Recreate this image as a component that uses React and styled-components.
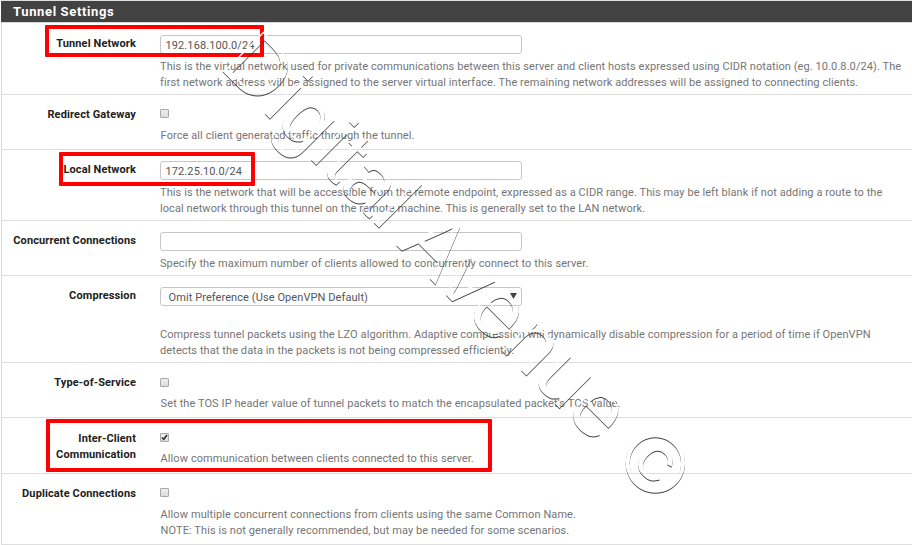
import React from 'react';
import styled, { createGlobalStyle } from 'styled-components';

const GlobalStyle = createGlobalStyle`
  * { box-sizing: border-box; }
  body { margin: 0; background: #fff; overflow: hidden; }
`;

const Panel = styled.main`
  position: relative;
  width: 912px;
  height: 545px;
  overflow: hidden;
  border-top: 1px solid #dcdfdd;
  border-left: 1px solid #fff;
  background: #fff;
  color: #757575;
  font: 11px/16px Roboto, "Liberation Sans", sans-serif;
  letter-spacing: 0.085px;
`;

const Heading = styled.h2`
  margin: 0;
  height: 21px;
  padding-left: 12px;
  background: #424242;
  color: #fff;
  font-size: 13px;
  font-weight: 700;
  line-height: 21px;
  letter-spacing: 0.64px;
`;

const Body = styled.div`
  border-top: 1px solid #d8d8d8;
  border-left: 1px solid #dcdcdc;
`;

const Row = styled.section`
  display: grid;
  grid-template-columns: 134px 752px;
  column-gap: 24px;
  height: ${(p) => p.$height}px;
  padding-top: ${(p) => p.$top ?? 11}px;
  border-bottom: 1px solid #dedede;
`;

const Label = styled.label`
  padding-top: ${(p) => p.$offset ?? 1}px;
  text-align: right;
  color: #212121;
  font-weight: 700;
  letter-spacing: 0.12px;
`;

const Field = styled.div`
  display: flex;
  flex-direction: column;
  align-items: flex-start;
`;

const TextInput = styled.input`
  width: 362px;
  height: 19px;
  margin: 0;
  padding: 1px 5px 0 4.5px;
  border: 1px solid #c6c6c6;
  border-radius: 3px;
  background: #fff;
  color: #555;
  font: inherit;
  letter-spacing: 0.1px;
`;

const SelectBox = styled.div`
  display: flex;
  align-items: center;
  justify-content: space-between;
  width: 362px;
  height: 19px;
  padding: 2px 4px 0 7.5px;
  border: 1px solid #c6c6c6;
  border-radius: 3px;
  color: #555;
`;

const Arrow = styled.svg`
  width: 7px;
  height: 6px;
  margin-top: -4px;
  fill: #444;
`;

const Check = styled.span`
  display: block;
  width: 9px;
  height: 9px;
  margin-top: ${(p) => p.$offset ?? 3}px;
  border: 1px solid #a9a9a9;
  border-radius: 1px;
  background: linear-gradient(#eee, #dcdcdc);
  svg { display: block; width: 7px; height: 7px; }
`;

const Help = styled.p`
  margin: ${(p) => p.$gap ?? 5}px 0 0 ${(p) => p.$indent ?? 0}px;
  white-space: pre;
`;

const Highlight = styled.div`
  position: absolute;
  left: ${(p) => p.$x}px;
  top: ${(p) => p.$y}px;
  width: ${(p) => p.$w}px;
  height: ${(p) => p.$h}px;
  border: 4px solid #fe0000;
  border-radius: 1px;
`;

const Watermark = styled.svg`
  position: absolute;
  left: -1px;
  top: -1px;
  width: 912px;
  height: 545px;
  pointer-events: none;
  font-family: "Liberation Sans", Arial, sans-serif;
  font-size: 84px;
  letter-spacing: 0;
`;

function Checkbox({ checked, offset }) {
  return (
    <Check role="checkbox" aria-checked={!!checked} $offset={offset}>
      {checked && (
        <svg viewBox="0 0 7 7">
          <path d="M1 3.5 2.8 5.3 6 1" fill="none" stroke="#333" strokeWidth="1.7" />
        </svg>
      )}
    </Check>
  );
}

export default function App() {
  return (
    <>
      <GlobalStyle />
      <Panel>
        <Heading>Tunnel Settings</Heading>
        <Body>
          <Row $height={72} $top={12}>
            <Label>Tunnel Network</Label>
            <Field>
              <TextInput defaultValue="192.168.100.0/24" />
              <Help>{'This is the virtual network used for private communications between this server and client hosts expressed using CIDR notation (eg. 10.0.8.0/24). The\nfirst network address will be assigned to the server virtual interface. The remaining network addresses will be assigned to connecting clients.'}</Help>
            </Field>
          </Row>
          <Row $height={55}>
            <Label>Redirect Gateway</Label>
            <Field>
              <Checkbox />
              <Help $gap={10} $indent={0.6}>Force all client generated traffic through the tunnel.</Help>
            </Field>
          </Row>
          <Row $height={71}>
            <Label>Local Network</Label>
            <Field>
              <TextInput defaultValue="172.25.10.0/24" />
              <Help>{'This is the network that will be accessible from the remote endpoint, expressed as a CIDR range. This may be left blank if not adding a route to the\nlocal network through this tunnel on the remote machine. This is generally set to the LAN network.'}</Help>
            </Field>
          </Row>
          <Row $height={55}>
            <Label>Concurrent Connections</Label>
            <Field>
              <TextInput />
              <Help>Specify the maximum number of clients allowed to concurrently connect to this server.</Help>
            </Field>
          </Row>
          <Row $height={87}>
            <Label>Compression</Label>
            <Field>
              <SelectBox>
                <span>Omit Preference (Use OpenVPN Default)</span>
                <Arrow viewBox="0 0 7 6"><path d="M0 0h7L3.5 6z" /></Arrow>
              </SelectBox>
              <Help $gap={21}>{'Compress tunnel packets using the LZO algorithm. Adaptive compression will dynamically disable compression for a period of time if OpenVPN\ndetects that the data in the packets is not being compressed efficiently.'}</Help>
            </Field>
          </Row>
          <Row $height={55}>
            <Label>Type-of-Service</Label>
            <Field>
              <Checkbox offset={4} />
              <Help $gap={9} $indent={0.6}>Set the TOS IP header value of tunnel packets to match the encapsulated packet's TOS value.</Help>
            </Field>
          </Row>
          <Row $height={56}>
            <Label $offset={2}>Inter-Client<br />Communication</Label>
            <Field>
              <Checkbox checked offset={4} />
              <Help $gap={9} $indent={0.6}>Allow communication between clients connected to this server.</Help>
            </Field>
          </Row>
          <Row $height={71}>
            <Label>Duplicate Connections</Label>
            <Field>
              <Checkbox />
              <Help $gap={10} $indent={0.6}>{'Allow multiple concurrent connections from clients using the same Common Name.\nNOTE: This is not generally recommended, but may be needed for some scenarios.'}</Help>
            </Field>
          </Row>
        </Body>
        <Highlight $x={44} $y={24} $w={219} $h={32} />
        <Highlight $x={58} $y={151} $w={196} $h={34} />
        <Highlight $x={45} $y={418} $w={446} $h={53} />
        <Watermark>
          <defs>
            <filter id="emboss" filterUnits="userSpaceOnUse" x="0" y="0" width="912" height="545" colorInterpolationFilters="sRGB">
              <feOffset in="SourceAlpha" dy="-1" result="up" />
              <feOffset in="SourceAlpha" dy="2" result="down" />
              <feComposite in="SourceAlpha" in2="up" operator="out" result="lower" />
              <feComposite in="SourceAlpha" in2="down" operator="out" result="upper" />
              <feFlood floodColor="#3c3c3c" />
              <feComposite in2="lower" operator="in" result="dark" />
              <feFlood floodColor="#fff" />
              <feComposite in2="upper" operator="in" result="light" />
              <feMerge>
                <feMergeNode in="light" />
                <feMergeNode in="dark" />
              </feMerge>
            </filter>
          </defs>
          <g filter="url(#emboss)">
            <text transform="translate(217.8 67.6) rotate(45)">Digital Avenue ©</text>
          </g>
        </Watermark>
      </Panel>
    </>
  );
}
